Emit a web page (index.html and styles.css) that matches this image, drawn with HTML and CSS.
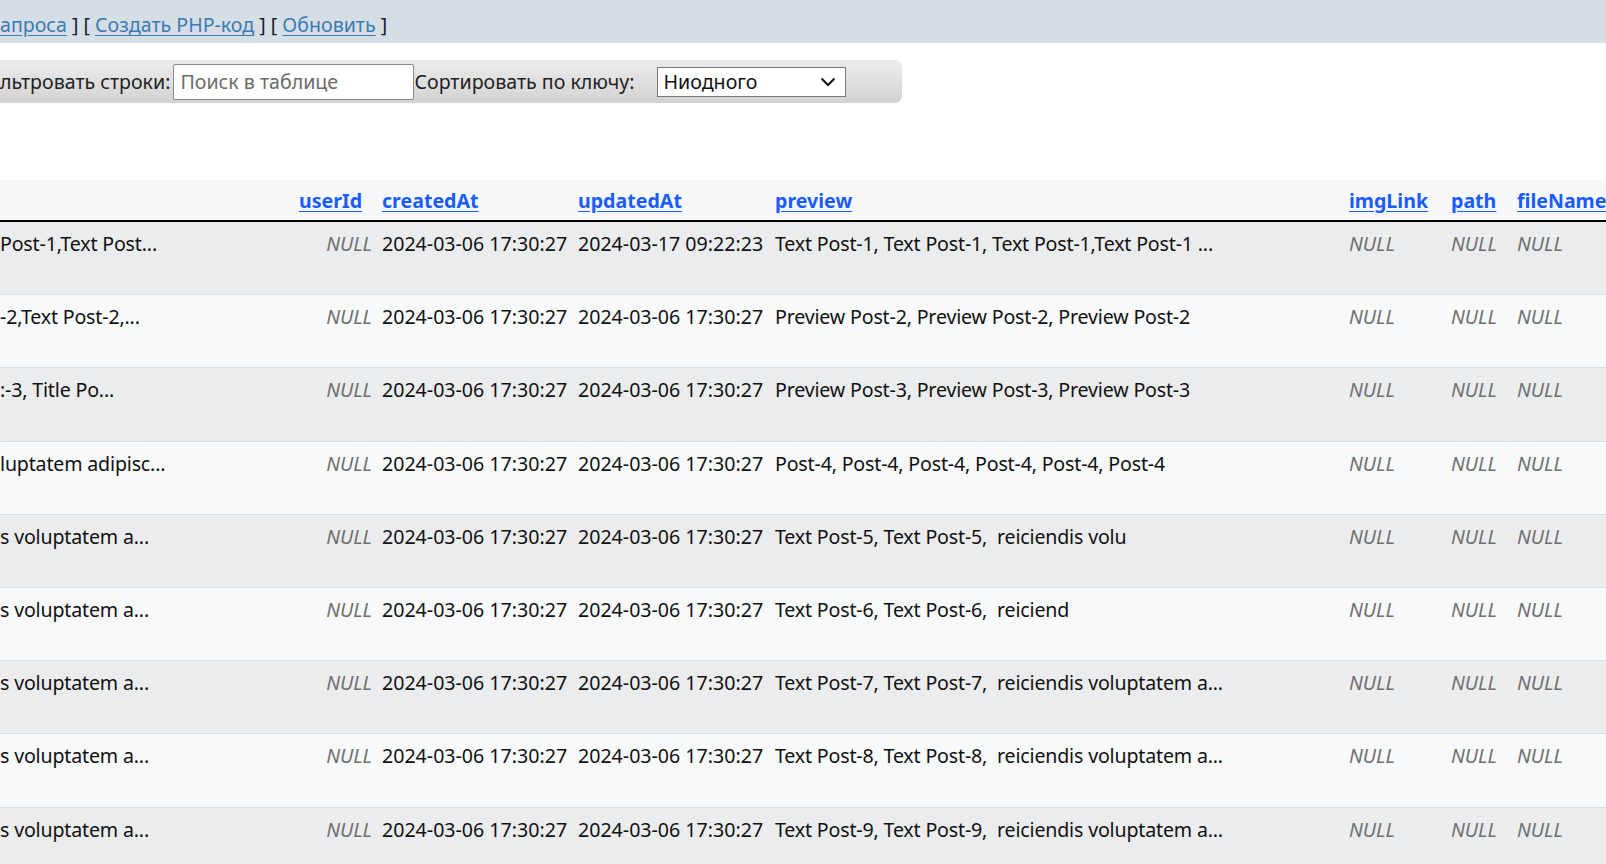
FILE: index.html
```html
<!DOCTYPE html>
<html lang="ru">
<head>
<meta charset="utf-8">
<title>phpMyAdmin — posts</title>
<link rel="stylesheet" href="styles.css">
</head>
<body>
<div class="page">
  <div class="sqlbar">
    <a href="#">апроса</a> ] [ <a href="#">Создать PHP-код</a> ] [ <a href="#">Обновить</a> ]
  </div>

  <div class="filterbar">
    <span class="label">льтровать строки:</span>
    <input class="search" type="text" placeholder="Поиск в таблице">
    <span class="label">Сортировать по ключу:</span>
    <div class="select">
      <span>Ниодного</span>
      <svg width="16" height="10" viewBox="0 0 16 10"><path d="M1.5 1.5 L8 8 L14.5 1.5" fill="none" stroke="#111" stroke-width="2"/></svg>
    </div>
  </div>

  <div class="tablewrap">
    <table class="data">
      <colgroup>
        <col class="c-text"><col class="c-user"><col class="c-created"><col class="c-updated"><col class="c-preview"><col class="c-img"><col class="c-path"><col class="c-file">
      </colgroup>
      <thead>
        <tr>
          <th></th>
          <th><a href="#">userId</a></th>
          <th><a href="#">createdAt</a></th>
          <th><a href="#">updatedAt</a></th>
          <th><a href="#">preview</a></th>
          <th><a href="#">imgLink</a></th>
          <th><a href="#">path</a></th>
          <th><a href="#">fileName</a></th>
        </tr>
      </thead>
      <tbody>
        <tr><td class="txt">Post-1,Text Post...</td><td class="null">NULL</td><td>2024-03-06 17:30:27</td><td>2024-03-17 09:22:23</td><td class="txt">Text Post-1, Text Post-1, Text Post-1,Text Post-1 ...</td><td class="nl">NULL</td><td class="nl">NULL</td><td class="nl">NULL</td></tr>
        <tr><td class="txt">-2,Text Post-2,...</td><td class="null">NULL</td><td>2024-03-06 17:30:27</td><td>2024-03-06 17:30:27</td><td class="txt">Preview Post-2, Preview Post-2, Preview Post-2</td><td class="nl">NULL</td><td class="nl">NULL</td><td class="nl">NULL</td></tr>
        <tr><td class="txt">:-3, Title Po...</td><td class="null">NULL</td><td>2024-03-06 17:30:27</td><td>2024-03-06 17:30:27</td><td class="txt">Preview Post-3, Preview Post-3, Preview Post-3</td><td class="nl">NULL</td><td class="nl">NULL</td><td class="nl">NULL</td></tr>
        <tr><td class="txt">luptatem adipisc...</td><td class="null">NULL</td><td>2024-03-06 17:30:27</td><td>2024-03-06 17:30:27</td><td class="txt">Post-4, Post-4, Post-4, Post-4, Post-4, Post-4</td><td class="nl">NULL</td><td class="nl">NULL</td><td class="nl">NULL</td></tr>
        <tr><td class="txt">s voluptatem a...</td><td class="null">NULL</td><td>2024-03-06 17:30:27</td><td>2024-03-06 17:30:27</td><td class="txt">Text Post-5, Text Post-5,&nbsp; reiciendis volu</td><td class="nl">NULL</td><td class="nl">NULL</td><td class="nl">NULL</td></tr>
        <tr><td class="txt">s voluptatem a...</td><td class="null">NULL</td><td>2024-03-06 17:30:27</td><td>2024-03-06 17:30:27</td><td class="txt">Text Post-6, Text Post-6,&nbsp; reiciend</td><td class="nl">NULL</td><td class="nl">NULL</td><td class="nl">NULL</td></tr>
        <tr><td class="txt">s voluptatem a...</td><td class="null">NULL</td><td>2024-03-06 17:30:27</td><td>2024-03-06 17:30:27</td><td class="txt">Text Post-7, Text Post-7,&nbsp; reiciendis voluptatem a...</td><td class="nl">NULL</td><td class="nl">NULL</td><td class="nl">NULL</td></tr>
        <tr><td class="txt">s voluptatem a...</td><td class="null">NULL</td><td>2024-03-06 17:30:27</td><td>2024-03-06 17:30:27</td><td class="txt">Text Post-8, Text Post-8,&nbsp; reiciendis voluptatem a...</td><td class="nl">NULL</td><td class="nl">NULL</td><td class="nl">NULL</td></tr>
        <tr><td class="txt">s voluptatem a...</td><td class="null">NULL</td><td>2024-03-06 17:30:27</td><td>2024-03-06 17:30:27</td><td class="txt">Text Post-9, Text Post-9,&nbsp; reiciendis voluptatem a...</td><td class="nl">NULL</td><td class="nl">NULL</td><td class="nl">NULL</td></tr>
      </tbody>
    </table>
  </div>
</div>
</body>
</html>
```
FILE: styles.css
```css
html, body {
  margin: 0;
  padding: 0;
  background: #fff;
  overflow: hidden;
}
body {
  font-family: "Noto Sans", "Open Sans", sans-serif;
  font-size: 19.6px;
  line-height: 24px;
  color: #111;
}
.page {
  width: 1606px;
  overflow: hidden;
}

/* top SQL link bar */
.sqlbar {
  height: 43px;
  box-sizing: border-box;
  padding-top: 12px;
  line-height: 26px;
  background: #d5dde5;
  color: #1a1a2e;
  white-space: nowrap;
}
.sqlbar a {
  color: #3a7cb6;
  text-decoration: underline;
  text-underline-offset: 3px;
}

/* filter bar */
.filterbar {
  margin-top: 17px;
  display: flex;
  align-items: center;
  width: 902px;
  height: 43px;
  box-sizing: border-box;
  background: linear-gradient(#ececec, #d2d2d2);
  border-radius: 0 7px 7px 0;
  white-space: nowrap;
}
.filterbar .label {
  color: #222;
}
.search {
  margin-left: 3px;
  width: 241px;
  height: 36px;
  box-sizing: border-box;
  border: 1px solid #8a8a8a;
  border-radius: 2px;
  padding: 0 6px;
  font: inherit;
  color: #222;
  background: #fff;
}
.search::placeholder {
  color: #6b6b6b;
}
.select {
  margin-left: 22px;
  width: 189px;
  height: 30px;
  box-sizing: border-box;
  border: 1px solid #7a7a7a;
  background: #fff;
  display: flex;
  align-items: center;
  justify-content: space-between;
  padding: 0 9px 0 6px;
  color: #111;
}
.select svg {
  display: block;
}

/* data table */
.tablewrap {
  margin-top: 76px;
  width: 1606px;
  overflow: hidden;
}
.data {
  border-collapse: collapse;
  table-layout: fixed;
  width: 1632px;
}
.c-text { width: 294px; }
.c-user { width: 83px; }
.c-created { width: 196px; }
.c-updated { width: 197px; }
.c-preview { width: 574px; }
.c-img { width: 102px; }
.c-path { width: 66px; }
.c-file { width: 120px; }

.data th {
  background: #f7f8fa;
  text-align: left;
  font-weight: 700;
  padding: 10px 5px 7px;
  height: 24px;
  border-bottom: 2px solid #000;
  white-space: nowrap;
  vertical-align: top;
}
.data th:first-child,
.data td:first-child {
  padding-left: 0;
}
.data th a {
  color: #1a5cff;
  text-decoration: underline;
  text-underline-offset: 3px;
}
.data td {
  padding: 10px 5px 38.2px;
  height: 24px;
  vertical-align: top;
  white-space: nowrap;
  overflow: hidden;
  border-bottom: 1px solid #dcdfe3;
}
.data td.txt {
  letter-spacing: -0.17px;
}
.data tbody tr:nth-child(odd) td { background: #ebecee; }
.data tbody tr:nth-child(even) td { background: #f8f9fa; }
.data td.null {
  text-align: right;
  font-style: italic;
  color: #707070;
}
.data td.nl {
  font-style: italic;
  color: #707070;
}
```
